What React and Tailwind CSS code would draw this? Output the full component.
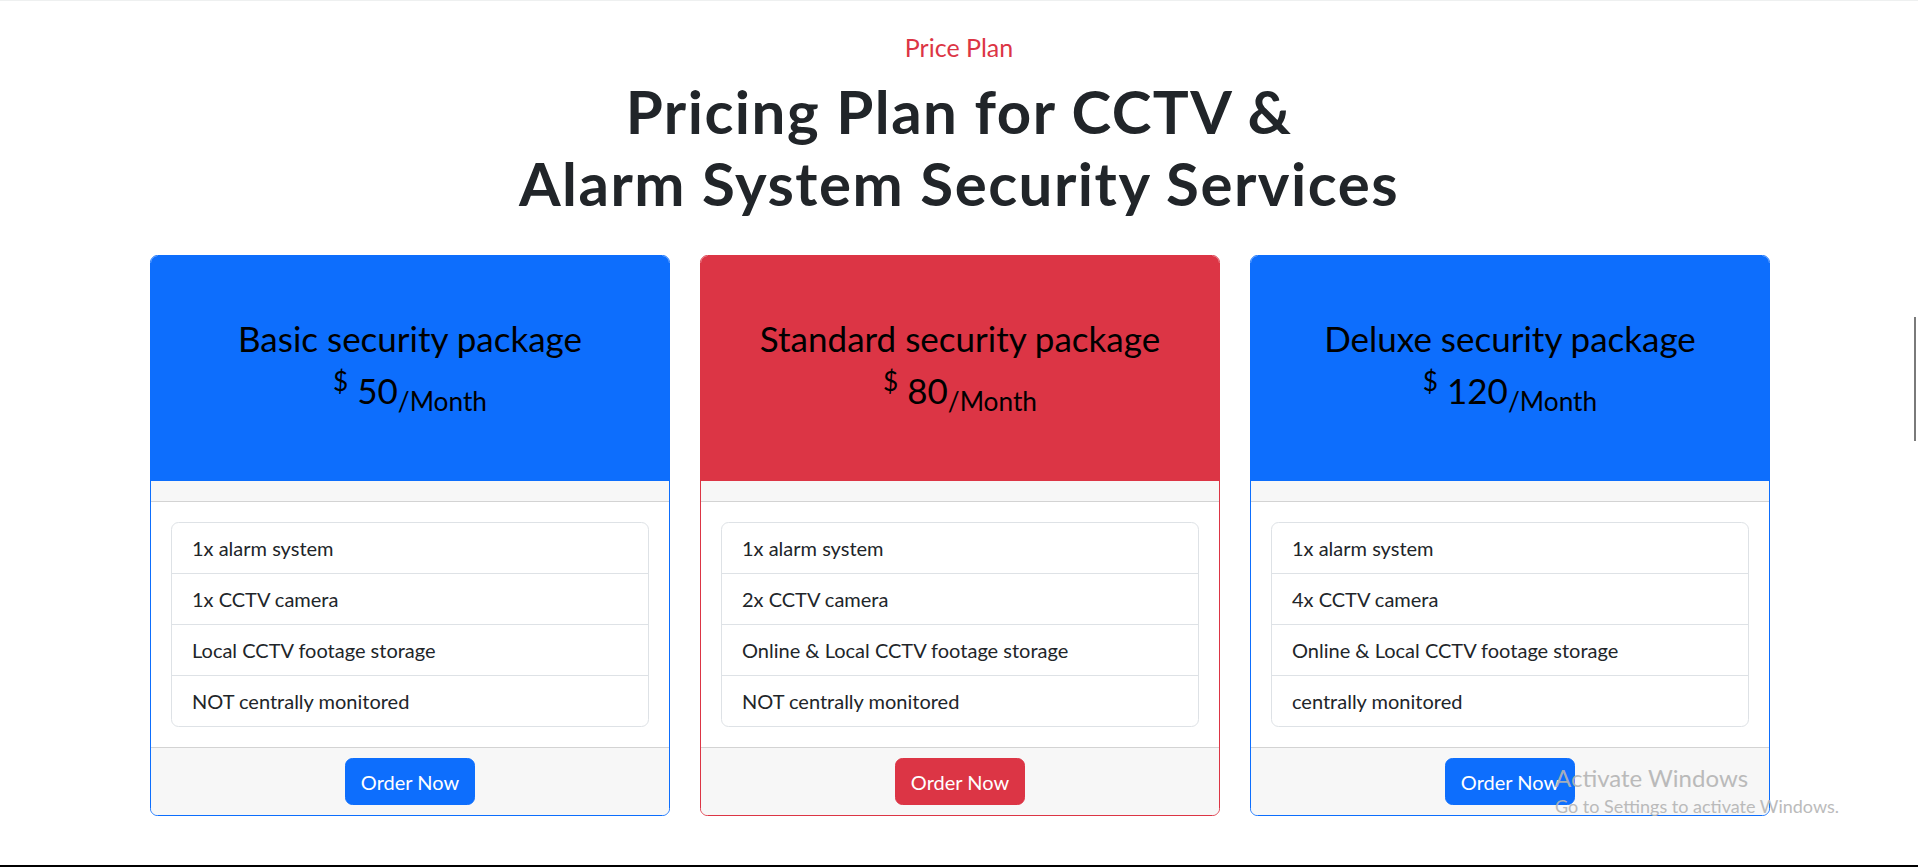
import React from "react";

const plans = [
  {
    name: "Basic security package",
    price: "50",
    color: "blue",
    features: ["1x alarm system", "1x CCTV camera", "Local CCTV footage storage", "NOT centrally monitored"],
  },
  {
    name: "Standard security package",
    price: "80",
    color: "red",
    features: ["1x alarm system", "2x CCTV camera", "Online & Local CCTV footage storage", "NOT centrally monitored"],
  },
  {
    name: "Deluxe security package",
    price: "120",
    color: "blue",
    features: ["1x alarm system", "4x CCTV camera", "Online & Local CCTV footage storage", "centrally monitored"],
  },
];

function Card({ plan }) {
  const red = plan.color === "red";
  return (
    <div
      className={
        "flex flex-col rounded-[7.5px] border overflow-hidden bg-white " +
        (red ? "border-[#dc3545]" : "border-[#0d6efd]")
      }
    >
      <div
        className={
          "h-[225px] pt-[61px] text-center text-black " + (red ? "bg-[#dc3545]" : "bg-[#0d6efd]")
        }
      >
        <h3 className="text-[35px] leading-[42px] mb-[10px]">{plan.name}</h3>
        <h3 className="text-[35px] leading-[42px]">
          <sup>$</sup> {plan.price}
          <sub>/Month</sub>
        </h3>
      </div>
      <div className="h-[21px] bg-[#f7f7f7] border-b border-[#d3d3d3]" />
      <div className="p-[20px]">
        <ul className="border border-[#dee2e6] rounded-[7.5px] text-[#212529]">
          {plan.features.map((f, i) => (
            <li
              key={i}
              className={
                "px-[20px] py-[10px] text-[20px] leading-[30px] " +
                (i < plan.features.length - 1 ? "border-b border-[#dee2e6]" : "")
              }
            >
              {f}
            </li>
          ))}
        </ul>
      </div>
      <div className="border-t border-[#d3d3d3] bg-[#f7f7f7] py-[10px] flex justify-center">
        <button
          className={
            "px-[15px] py-[7.5px] text-[20px] leading-[30px] text-white rounded-[7.5px] border " +
            (red ? "bg-[#dc3545] border-[#dc3545]" : "bg-[#0d6efd] border-[#0d6efd]")
          }
        >
          Order Now
        </button>
      </div>
    </div>
  );
}

export default function App() {
  return (
    <div
      className="relative h-[867px] bg-white border-t border-[#eef0f0] border-b-2 border-b-black overflow-hidden"
      style={{ fontFamily: "Lato, 'Noto Sans', sans-serif" }}
    >
      <div className="pt-[31px] text-center">
        <div className="text-[25px] leading-[30px] text-[#dc3545] mb-[13px]">Price Plan</div>
        <h1 className="text-[60px] leading-[72px] font-bold tracking-[1.5px] text-[#212529] mb-[36px]">
          Pricing Plan for CCTV &amp;
          <br />
          Alarm System Security Services
        </h1>
      </div>
      <div className="ml-[150px] w-[1620px] grid grid-cols-3 gap-[30px]">
        {plans.map((p, i) => (
          <Card key={i} plan={p} />
        ))}
      </div>
      <div className="absolute left-[1555px] top-[762px] pointer-events-none text-[#b4b4b4] opacity-90">
        <div className="text-[24px] leading-[30px]">Activate Windows</div>
        <div className="text-[18px] leading-[26px]">Go to Settings to activate Windows.</div>
      </div>
      <div className="absolute right-[2px] top-[316px] h-[124px] w-[2px] bg-[#7a7a7a]" />
    </div>
  );
}
